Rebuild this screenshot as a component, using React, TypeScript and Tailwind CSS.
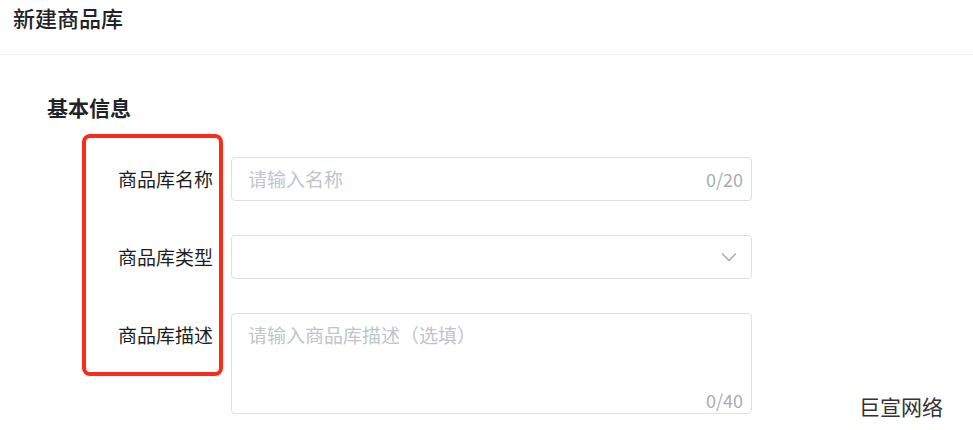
import React from "react"

const WM_COLS = [-95, 142, 379, 616, 853]
const WM_ROWS = Array.from({ length: 13 }, (_, i) => -145 + i * 55.5)

function Watermark() {
  return (
    <svg className="pointer-events-none absolute inset-0" width="973" height="430">
      {WM_COLS.map((x) =>
        WM_ROWS.map((y) => (
          <g key={`${x}-${y}`} transform={`translate(${x} ${y}) rotate(45)`} fill="#000" fillOpacity="0.022" fontSize="18" fontFamily="Liberation Sans, sans-serif">
            <text x="0" y="14">chenhuarui - 2022/08/23</text>
            <text x="0" y="35">10:13:33</text>
          </g>
        ))
      )}
    </svg>
  )
}

function Chevron() {
  return (
    <svg width="16" height="9" viewBox="0 0 16 9" fill="none">
      <polyline points="1.5,1 8,7.5 14.5,1" stroke="#a8abb2" strokeWidth="1.5" strokeLinecap="round" strokeLinejoin="round" />
    </svg>
  )
}

const LABELS = ["商品库名称", "商品库类型", "商品库描述"]

export default function App() {
  return (
    <div className="relative h-[430px] w-[973px] overflow-hidden bg-white font-['Noto_Sans_CJK_SC',sans-serif]">
      <div className="h-[55px] border-b border-[#ebeef5] pl-[13px] pt-[2px]">
        <h1 className="text-[22px] font-medium leading-[30px] text-[#1f2329]">新建商品库</h1>
      </div>

      <div className="pl-[47px]">
        <h2 className="mt-[37px] text-[21px] font-bold leading-[30px] text-[#1f2329]">基本信息</h2>

        <div className="ml-[35px] mt-[12px] flex items-start">
          <div className="flex w-[141px] flex-col gap-[34px] rounded-[8px] border-4 border-[#fa2b19] pb-[15px] pr-[6px] pt-[19px]">
            {LABELS.map((l) => (
              <div key={l} className="flex h-[44px] items-center justify-end text-[19px] text-[#1f1f1f]">
                {l}
              </div>
            ))}
          </div>

          <div className="ml-[8px] flex w-[521px] flex-col gap-[34px] pt-[23px]">
            <div className="flex h-[44px] items-center justify-between rounded-[4px] border border-[#dcdfe6] pl-[16px] pr-[8px]">
              <span className="text-[19px] text-[#c0c4cc]">请输入名称</span>
              <span className="text-[18px] text-[#a8abb2]">0/20</span>
            </div>

            <div className="flex h-[44px] items-center justify-end rounded-[4px] border border-[#dcdfe6] pr-[14px]">
              <Chevron />
            </div>

            <div className="flex h-[101px] flex-col justify-between rounded-[4px] border border-[#dcdfe6] pb-[3px] pl-[16px] pr-[8px] pt-[8px]">
              <span className="text-[19px] leading-[26px] text-[#c0c4cc]">请输入商品库描述（选填）</span>
              <span className="self-end text-[18px] leading-[20px] text-[#a8abb2]">0/40</span>
            </div>
          </div>
        </div>
      </div>

      <div className="absolute bottom-[12px] right-[30px] text-[21px] leading-[24px] text-[#333]">巨宣网络</div>

      <Watermark />
    </div>
  )
}
